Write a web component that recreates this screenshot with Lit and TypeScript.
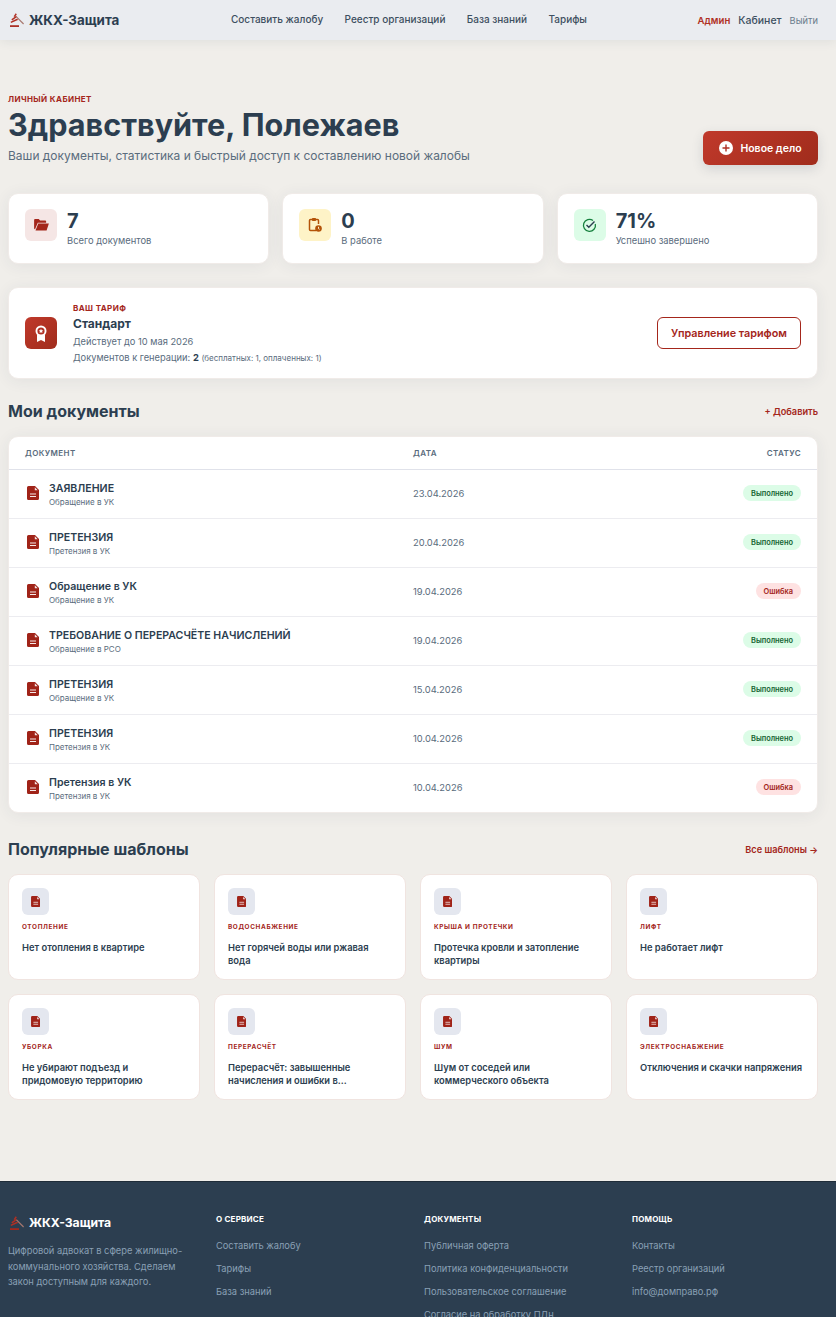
import { LitElement, html, css } from "lit";
import { customElement } from "lit/decorators.js";

const docIcon = (w: number, h: number) => html`<svg width=${w} height=${h} viewBox="0 0 12 14"><path fill="#a02318" d="M1.500 0H8l4 4v8.500a1.500 1.500 0 0 1-1.500 1.500h-9A1.500 1.500 0 0 1 0 12.500v-11A1.500 1.500 0 0 1 1.500 0z"/><path fill="#fff" fill-opacity=".9" d="M7.800 1.300 10.700 4.200H7.800z"/><path fill="none" stroke="#fff" stroke-opacity=".9" d="M3 8h6M3 10.500h6"/></svg>`;
const logo = html`<svg class="logo-ic" width="14" height="14" viewBox="0 0 14 14"><g fill="none" stroke-linecap="butt"><path stroke="#a8281c" stroke-width="1.700" d="M0 13.100h9"/><path stroke="#b03024" stroke-width="1.500" d="M.8 9.400 7.600 6.300"/><path stroke="#b03024" stroke-width="1.500" d="M1.800 6.800 6.600 3.400"/><path stroke="#b03024" stroke-width="1.500" d="M4.200 3.600 6.300 .8"/><path stroke="#a8786f" stroke-width="1.200" d="M6.500 3.800 13.600 11"/></g></svg>`;

const docs = [
  ["ЗАЯВЛЕНИЕ", "Обращение в УК", "23.04.2026", 1],
  ["ПРЕТЕНЗИЯ", "Претензия в УК", "20.04.2026", 1],
  ["Обращение в УК", "Обращение в УК", "19.04.2026", 0],
  ["ТРЕБОВАНИЕ О ПЕРЕРАСЧЁТЕ НАЧИСЛЕНИЙ", "Обращение в РСО", "19.04.2026", 1],
  ["ПРЕТЕНЗИЯ", "Обращение в УК", "15.04.2026", 1],
  ["ПРЕТЕНЗИЯ", "Претензия в УК", "10.04.2026", 1],
  ["Претензия в УК", "Претензия в УК", "10.04.2026", 0],
];
const templates = [
  ["ОТОПЛЕНИЕ", "Нет отопления в квартире"],
  ["ВОДОСНАБЖЕНИЕ", "Нет горячей воды или ржавая вода"],
  ["КРЫША И ПРОТЕЧКИ", "Протечка кровли и затопление квартиры"],
  ["ЛИФТ", "Не работает лифт"],
  ["УБОРКА", "Не убирают подъезд и придомовую территорию"],
  ["ПЕРЕРАСЧЁТ", "Перерасчёт: завышенные начисления и ошибки в..."],
  ["ШУМ", "Шум от соседей или коммерческого объекта"],
  ["ЭЛЕКТРОСНАБЖЕНИЕ", "Отключения и скачки напряжения"],
];
const footer = [
  ["О СЕРВИСЕ", ["Составить жалобу", "Тарифы", "База знаний"]],
  ["ДОКУМЕНТЫ", ["Публичная оферта", "Политика конфиденциальности", "Пользовательское соглашение", "Согласие на обработку ПДн"]],
  ["ПОМОЩЬ", ["Контакты", "Реестр организаций", "info@домправо.рф"]],
] as [string, string[]][];

@customElement("app-root")
export class AppRoot extends LitElement {
  static styles = css`
    :host { display: block; height: 1317px; overflow: hidden; background: #f0eeea; font-family: Inter, "Liberation Sans", sans-serif; color: #2c3e50; position: relative; }
    * { box-sizing: border-box; }
    a { color: inherit; text-decoration: none; }
    header { height: 40px; background: #eaecf0; box-shadow: 0 2px 10px rgba(44,62,80,.08); display: flex; align-items: center; justify-content: space-between; padding: 0 18px 0 10px; position: relative; }
    .brand { display: flex; align-items: center; gap: 5px; font-size: 13.4px; font-weight: 700; line-height: 20px; }
    .nav { display: flex; gap: 21.4px; font-size: 10px; font-weight: 500; color: #3d4f60; position: absolute; left: 231px; top: 13px; line-height: 13px; }
    .user { display: flex; align-items: center; gap: 8px; }
    .admin { font-size: 9.6px; font-weight: 600; color: #b03024; }
    .cab { font-size: 10.5px; font-weight: 500; color: #3d4f60; }
    .out { font-size: 9.3px; color: #6b7c8d; }
    main { padding: 54px 18px 0 8px; }
    .hero { display: flex; justify-content: space-between; align-items: flex-end; }
    .eyebrow { font-size: 8px; font-weight: 700; letter-spacing: .4px; color: #a4261b; line-height: 10px; }
    h1 { margin: 2px 0 0; font-size: 30.6px; font-weight: 700; line-height: 38px; color: #2c3e50; }
    .sub { font-size: 11.97px; color: #5a6c7d; line-height: 16px; margin-top: 4px; }
    .new { width: 115px; height: 34px; border-radius: 6px; background: linear-gradient(135deg, #c0392b, #a02c1c); color: #fff; font-size: 10.5px; font-weight: 600; display: flex; align-items: center; justify-content: center; gap: 7px; box-shadow: 0 4px 12px rgba(44,62,80,.15); margin-bottom: -1px; }
    .stats { display: grid; grid-template-columns: repeat(3, 1fr); gap: 13px; margin-top: 29px; }
    .card { background: #fff; border-radius: 10px; box-shadow: 0 2px 16px rgba(44,62,80,.07); border: 1px solid #f0ebe8; }
    .stat { height: 71px; padding: 15px 16px; display: flex; gap: 10px; }
    .ic { width: 32px; height: 32px; border-radius: 6px; display: flex; align-items: center; justify-content: center; flex: none; }
    .val { font-size: 20px; font-weight: 700; line-height: 24px; }
    .lbl { font-size: 9.4px; color: #5a6c7d; line-height: 12px; margin-top: 2px; }
    .tariff { margin-top: 23px; height: 92px; padding: 0 16px; display: flex; align-items: center; gap: 16px; }
    .tariff .ic { background: linear-gradient(135deg, #c0392b, #a02c1c); }
    .t-body { flex: 1; }
    .t-eye { font-size: 8px; font-weight: 700; letter-spacing: .4px; color: #a4261b; line-height: 10px; }
    .t-name { font-size: 12px; font-weight: 700; line-height: 15px; margin-top: 3px; }
    .t-line { font-size: 9.3px; color: #5a6c7d; line-height: 12px; margin-top: 5px; }
    .t-line + .t-line { margin-top: 4px; }
    .t-line b { color: #2c3e50; font-weight: 700; }
    .t-line small { font-size: 8px; }
    .manage { width: 144px; height: 32px; border: 1px solid #a4261b; border-radius: 6px; color: #a4261b; font-size: 10.8px; font-weight: 600; display: flex; align-items: center; justify-content: center; }
    .sec { display: flex; justify-content: space-between; align-items: center; }
    .sec h2 { margin: 0; font-size: 16px; font-weight: 700; line-height: 20px; }
    .sec a { font-size: 9.2px; font-weight: 600; color: #a4261b; }
    .docs-sec { margin-top: 22px; }
    .table { margin-top: 15px; overflow: hidden; }
    .row { display: grid; grid-template-columns: 388px 1fr auto; align-items: center; padding: 0 16px 2px; height: 49px; border-top: 1px solid #ececf0; }
    .row.head { height: 33px; padding: 0 16px; border-top: 0; border-bottom: 1px solid #e0e2ea; font-size: 8px; font-weight: 600; letter-spacing: .4px; color: #5a6c7d; }
    .row.head + .row { border-top: 0; height: 48px; }
    .doc { display: flex; align-items: center; gap: 10px; padding-left: 2px; }
    .doc svg { flex: none; }
    .doc-text { padding-top: 3px; }
    .d-name { font-size: 10.6px; font-weight: 600; line-height: 13px; }
    .d-sub { font-size: 8px; color: #5a6c7d; line-height: 10px; margin-top: 2px; }
    .date { font-size: 9.4px; color: #5a6c7d; }
    .badge { height: 16px; border-radius: 8px; padding: 0 8px; font-size: 7.4px; font-weight: 600; display: flex; align-items: center; justify-self: end; }
    .ok { background: #dcfce7; color: #166534; }
    .err { background: #fee2e2; color: #a4261b; }
    .tpl-sec { margin-top: 26px; }
    .grid { display: grid; grid-template-columns: repeat(4, 1fr); gap: 14px; margin-top: 15px; }
    .tpl { height: 106px; padding: 13px; box-shadow: none; border-color: #f0e4e0; }
    .tpl .ic { width: 27px; height: 27px; background: #e4e7ef; }
    .cat { font-size: 6.4px; font-weight: 700; letter-spacing: .64px; color: #a4261b; line-height: 8px; margin-top: 8px; }
    .ttl { font-size: 9.35px; font-weight: 600; line-height: 13px; margin-top: 10px; }
    footer { position: absolute; left: 0; right: 0; top: 1181px; height: 260px; background: #2c3e50; border-top: 1px solid #1f2c38; padding: 31px 18px 0 8px; display: grid; grid-template-columns: 208px 208px 208px 1fr; color: #8aa0b5; }
    .f-brand { display: flex; align-items: center; gap: 5px; font-size: 12.2px; font-weight: 700; color: #fff; line-height: 18px; margin-top: 1px; padding-left: 2px; }
    .f-desc { font-size: 9.33px; line-height: 15.5px; margin-top: 11px; width: 180px; }
    h4 { margin: 0; font-size: 8px; font-weight: 700; letter-spacing: .2px; color: #fff; line-height: 12px; }
    .links { display: flex; flex-direction: column; gap: 11px; margin-top: 15px; font-size: 9.3px; line-height: 12px; }
  `;

  render() {
    return html`
      <header>
        <div class="brand">${logo}<span>ЖКХ-Защита</span></div>
        <nav class="nav"><a>Составить жалобу</a><a>Реестр организаций</a><a>База знаний</a><a>Тарифы</a></nav>
        <div class="user"><a class="admin">Админ</a><a class="cab">Кабинет</a><a class="out">Выйти</a></div>
      </header>
      <main>
        <div class="hero">
          <div>
            <div class="eyebrow">ЛИЧНЫЙ КАБИНЕТ</div>
            <h1>Здравствуйте, Полежаев</h1>
            <div class="sub">Ваши документы, статистика и быстрый доступ к составлению новой жалобы</div>
          </div>
          <a class="new"><svg width="14" height="14" viewBox="0 0 14 14"><circle cx="7" cy="7" r="7" fill="#fff"/><path d="M7 3.500v7M3.500 7h7" stroke="#b03024" stroke-width="1.400"/></svg>Новое дело</a>
        </div>
        <div class="stats">
          <div class="card stat"><div class="ic" style="background:#f5e6e5"><svg width="15" height="12" viewBox="0 0 16 13"><path fill="#a4261b" d="M0 1a1 1 0 0 1 1-1h4l1.500 1.500H12a1 1 0 0 1 1 1V4H4L1 11H1a1 1 0 0 1-1-1z"/><path fill="#a4261b" d="M4.500 5H16l-2.500 7.500H1.500z"/></svg></div><div><div class="val">7</div><div class="lbl">Всего документов</div></div></div>
          <div class="card stat"><div class="ic" style="background:#fef3c7"><svg width="16" height="16" viewBox="0 0 16 16"><path fill="none" stroke="#b45309" stroke-width="1.500" d="M9 13.500H3.500a1 1 0 0 1-1-1V3.500a1 1 0 0 1 1-1h7a1 1 0 0 1 1 1V7"/><rect x="5" y="1" width="4" height="3" rx=".8" fill="#b45309"/><circle cx="11.500" cy="11.500" r="3.300" fill="#b45309"/><path d="M11.500 9.800v1.900l1.100.6" stroke="#fef3c7" fill="none"/></svg></div><div><div class="val">0</div><div class="lbl">В работе</div></div></div>
          <div class="card stat"><div class="ic" style="background:#dcfce7"><svg width="15" height="15" viewBox="0 0 15 15"><path fill="none" stroke="#15803d" stroke-width="1.300" d="M13.300 6a6 6 0 1 1-2.300-3.500"/><path fill="none" stroke="#2c3e50" stroke-width="1.400" d="M4.500 7l2.300 2.300L12.500 3.500"/></svg></div><div><div class="val">71%</div><div class="lbl">Успешно завершено</div></div></div>
        </div>
        <div class="card tariff">
          <div class="ic"><svg width="14" height="17" viewBox="0 0 14 17"><path fill="#fff" d="M3 10v7l4-2 4 2v-7z"/><circle cx="7" cy="6" r="5.500" fill="#fff"/><circle cx="7" cy="6" r="3.600" fill="#b03024"/><path fill="#fff" d="m7 3.700.7 1.500 1.600.2-1.200 1.100.3 1.600L7 7.300l-1.400.8.300-1.600-1.200-1.100 1.600-.2z"/></svg></div>
          <div class="t-body">
            <div class="t-eye">ВАШ ТАРИФ</div>
            <div class="t-name">Стандарт</div>
            <div class="t-line">Действует до 10 мая 2026</div>
            <div class="t-line">Документов к генерации: <b>2</b> <small>(бесплатных: 1, оплаченных: 1)</small></div>
          </div>
          <a class="manage">Управление тарифом</a>
        </div>
        <div class="sec docs-sec"><h2>Мои документы</h2><a>+ Добавить</a></div>
        <div class="card table">
          <div class="row head"><div>ДОКУМЕНТ</div><div>ДАТА</div><div>СТАТУС</div></div>
          ${docs.map(d => html`<div class="row">
            <div class="doc">${docIcon(12, 14)}<div class="doc-text"><div class="d-name">${d[0]}</div><div class="d-sub">${d[1]}</div></div></div>
            <div class="date">${d[2]}</div>
            <div class="badge ${d[3] ? "ok" : "err"}">${d[3] ? "Выполнено" : "Ошибка"}</div>
          </div>`)}
        </div>
        <div class="sec tpl-sec"><h2>Популярные шаблоны</h2><a>Все шаблоны →</a></div>
        <div class="grid">
          ${templates.map(t => html`<div class="card tpl"><div class="ic">${docIcon(9.5, 11)}</div><div class="cat">${t[0]}</div><div class="ttl">${t[1]}</div></div>`)}
        </div>
      </main>
      <footer>
        <div><div class="f-brand">${logo}<span>ЖКХ-Защита</span></div><div class="f-desc">Цифровой адвокат в сфере жилищно-коммунального хозяйства. Сделаем закон доступным для каждого.</div></div>
        ${footer.map(([h, l]) => html`<div><h4>${h}</h4><div class="links">${l.map(x => html`<a>${x}</a>`)}</div></div>`)}
      </footer>
    `;
  }
}
